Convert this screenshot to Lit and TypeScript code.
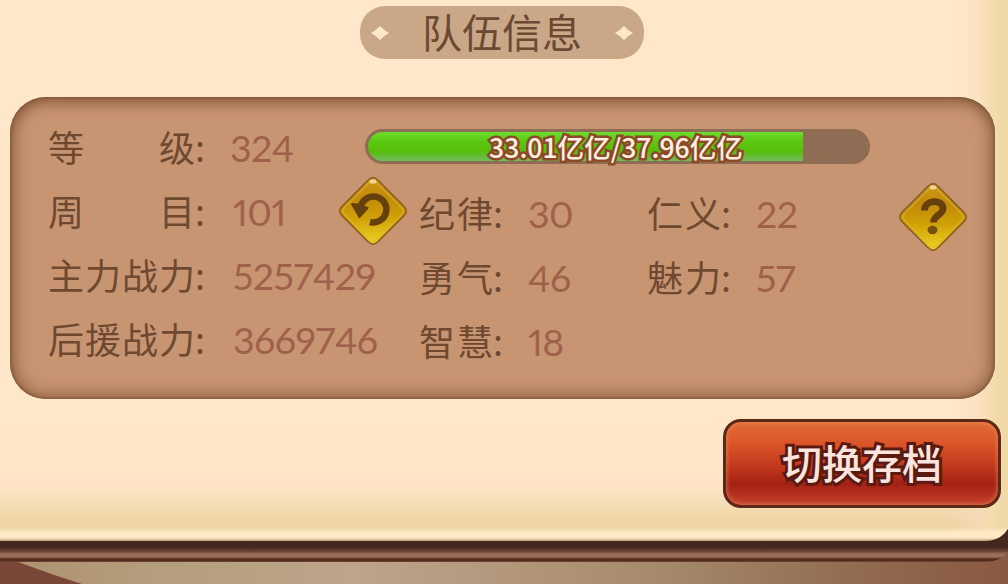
import { LitElement, html, css, svg } from 'lit';
import { customElement, property } from 'lit/decorators.js';

@customElement('diamond-button')
export class DiamondButton extends LitElement {

  @property() icon = 'help';

  static styles = css`
    :host {
      display: block;
      width: 70px;
      height: 70px;
    }

    svg {
      display: block;
    }
  `;

  renderIcon() {
    if (this.icon === 'reset') {
      return svg`
        <path d="M22.500 32 A13 13 0 1 1 32 46" fill="none" stroke="#65400b" stroke-width="6.500"/>
        <path d="M14 28 L20 28.500 L29.500 32 L21.500 41 Z" fill="#65400b" stroke="#65400b" stroke-width="2" stroke-linejoin="round"/>
      `;
    }
    return svg`
      <path d="M26.500 28.500 C26.500 17 45 17 45 26.500 C45 33 35.500 33 35.500 40.500" fill="none" stroke="#65400b" stroke-width="6.800"/>
      <ellipse cx="34.500" cy="48" rx="5" ry="4.200" fill="#75500b"/>
    `;
  }

  render() {
    return html`
      <svg width="70" height="70" viewBox="0 0 70 70">
        <defs>
          <linearGradient id="gold" x1="0" y1="0" x2="0" y2="1">
            <stop offset="0" stop-color="#cf9718"/>
            <stop offset="0.3" stop-color="#c18a0a"/>
            <stop offset="0.6" stop-color="#d0a006"/>
            <stop offset="1" stop-color="#eed426"/>
          </linearGradient>
        </defs>
        <path d="M30 4.500 Q35 -1 40 4.500 L65.500 30 Q71 35 65.500 40 L40 65.500 Q35 71 30 65.500 L4.500 40 Q-1 35 4.500 30 Z" fill="url(#gold)" stroke="#936323" stroke-width="1.800"/>
        <path d="M31 7 Q35 3 39 7 L63 31 Q67 35 63 39 L39 63 Q35 67 31 63 L7 39 Q3 35 7 31 Z" fill="none" stroke="#e0b62c" stroke-width="1.500" opacity="0.6"/>
        <ellipse cx="35" cy="5.500" rx="3.500" ry="2.200" fill="#f3d9a0" opacity="0.9"/>
        ${this.renderIcon()}
      </svg>
    `;
  }
}

@customElement('stat-item')
export class StatItem extends LitElement {

  @property() label = '';
  @property() value = '';

  static styles = css`
    :host {
      display: flex;
      align-items: center;
      height: 64px;
      white-space: nowrap;
    }

    .label {
      display: flex;
      flex: none;
      justify-content: space-between;
      width: var(--label-width, 74px);
      font-size: 36px;
      color: #6f492f;
    }

    .colon {
      flex: none;
      width: var(--colon-width, 35px);
      font-size: 36px;
      color: #6f492f;
    }

    .value {
      padding-top: 2px;
      font-family: Lato, "Noto Sans CJK SC", sans-serif;
      font-size: 37.5px;
      font-variant-numeric: proportional-nums;
      font-kerning: none;
      letter-spacing: -0.5px;
      color: #a0614a;
    }
  `;

  render() {
    return html`
      <div class="label">${[...this.label].map((char) => html`<span>${char}</span>`)}</div>
      <div class="colon">:</div>
      <div class="value">${this.value}</div>
    `;
  }
}

@customElement('app-root')
export class AppRoot extends LitElement {

  @property({ type: Number }) progress = 87.2;

  team = [
    { label: '等级', value: '324' },
    { label: '周目', value: '101' },
    { label: '主力战力', value: '5257429' },
    { label: '后援战力', value: '3669746' },
  ];

  virtues = [
    { label: '纪律', value: '30' },
    { label: '勇气', value: '46' },
    { label: '智慧', value: '18' },
  ];

  charms = [
    { label: '仁义', value: '22' },
    { label: '魅力', value: '57' },
  ];

  static styles = css`
    :host {
      display: block;
      width: 1008px;
      height: 584px;
      overflow: hidden;
      font-family: "Noto Sans CJK SC", sans-serif;
      background: linear-gradient(90deg, #ae9070, #b49d7c 15%, #bda48a 35%, #a68a6c 65%, #926b50 85%, #8a5843);
    }

    .frame {
      width: 1016px;
      height: 562px;
      box-sizing: border-box;
      border-radius: 0 0 30px 0;
      background: linear-gradient(#46271d 0 547px, #673f31 551px, #9a6d59 554px 557px, #532b1c 559px 561px, #7d5845);
    }

    .sheet {
      display: flex;
      flex-direction: column;
      width: 1012px;
      height: 541px;
      box-sizing: border-box;
      padding: 6px 11px 0 10px;
      border-radius: 0 0 26px 0;
      background:
        linear-gradient(transparent 527px, #ffebc6 533px, #fde8c2 538px, #b89d7b 541px),
        linear-gradient(90deg, transparent 950px, rgba(248, 220, 190, 0.6) 980px, #f4dcae 992px, #eed8a6 1006px),
        linear-gradient(#ffe8ca 0, #ffe8ca 370px, #ffe5c6 480px, #f7dfbc 500px, #f3dbae 510px, #ecd4a5 529px);
    }

    .title {
      display: flex;
      align-items: center;
      justify-content: space-between;
      width: 284px;
      height: 53px;
      box-sizing: border-box;
      padding: 0 10px;
      margin-left: 350px;
      border-radius: 25px;
      background: #caa787;
      color: #6c4933;
      font-size: 40px;
    }

    .name {
      margin-top: -4px;
    }

    .panel {
      display: grid;
      grid-template-columns: 291px 81px 228px 251px 70px;
      grid-template-rows: 64px 1fr;
      width: 985px;
      height: 302px;
      box-sizing: border-box;
      padding: 19px 0 0 37px;
      margin-top: 38px;
      border-radius: 36px;
      background: #c89573;
      box-shadow:
        inset 0 0 3px 1px #80573e,
        inset 0 0 16px 5px rgba(121, 78, 44, 0.65),
        inset 0 5px 10px rgba(115, 70, 40, 0.35);
    }

    .team {
      grid-row: 1 / 3;
      --label-width: 147px;
      margin: -2px 0 0 1px;
    }

    .team stat-item:not(:first-child) {
      --colon-width: 38px;
    }

    .bar {
      grid-column: 2 / 6;
      display: grid;
      width: 505px;
      height: 35px;
      margin: 13px 0 0 27px;
      box-sizing: border-box;
      padding: 3px;
      border-radius: 18px;
      background: #8e6d54;
    }

    .fill {
      grid-area: 1 / 1;
      border-radius: 15px 0 0 15px;
      background: linear-gradient(#6dde31, #5ecb15 25%, #56bd09 65%, #72bd5d);
    }

    .amount {
      grid-area: 1 / 1;
      justify-self: center;
      margin-right: 3px;
      line-height: 29px;
      font-size: 26.6px;
      font-weight: 500;
      color: #fff0e0;
      -webkit-text-stroke: 5px #8d4927;
      paint-order: stroke fill;
      z-index: 1;
    }

    .reset {
      margin-top: -4px;
    }

    .help {
      margin-top: 2px;
    }

    .save {
      width: 278px;
      height: 89px;
      margin: 20px 0 0 713px;
      padding: 0 0 3px;
      border: 3px solid #5c2817;
      border-radius: 18px;
      background: linear-gradient(#e06a38, #dc5629 25%, #c43a1e 52%, #a32113 75%, #b42e1f 85%, #c5402e);
      box-shadow: inset 0 0 4px 1px rgba(240, 145, 90, 0.6);
      font: 500 40px/1 "Noto Sans CJK SC", sans-serif;
      color: #fde5df;
      -webkit-text-stroke: 6px #5a1a12;
      paint-order: stroke fill;
    }

    .ground {
      display: block;
    }
  `;

  renderSpark() {
    return html`
      <svg width="20" height="16" viewBox="0 0 20 16">
        <path d="M10 1 Q13.500 5 19 8 Q13.500 11 10 15 Q6.500 11 1 8 Q6.500 5 10 1Z" fill="#ffe8ca"/>
      </svg>
    `;
  }

  renderStats(items: { label: string, value: string }[]) {
    return items.map((item) => html`<stat-item label=${item.label} value=${item.value}></stat-item>`);
  }

  render() {
    return html`
      <div class="frame">
        <div class="sheet">
          <div class="title">${this.renderSpark()}<span class="name">队伍信息</span>${this.renderSpark()}</div>
          <div class="panel">
            <div class="team">${this.renderStats(this.team)}</div>
            <div class="bar">
              <div class="fill" style="width: ${this.progress}%"></div>
              <div class="amount">33.01亿亿/37.96亿亿</div>
            </div>
            <diamond-button class="reset" icon="reset"></diamond-button>
            <div class="stats">${this.renderStats(this.virtues)}</div>
            <div class="stats">${this.renderStats(this.charms)}</div>
            <diamond-button class="help" icon="help"></diamond-button>
          </div>
          <button class="save">切换存档</button>
        </div>
      </div>
      <svg class="ground" width="1008" height="22" viewBox="0 0 1008 22">
        <path d="M0 0 H18 Q50 12 82 22 H0Z" fill="#794738"/>
      </svg>
    `;
  }
}
